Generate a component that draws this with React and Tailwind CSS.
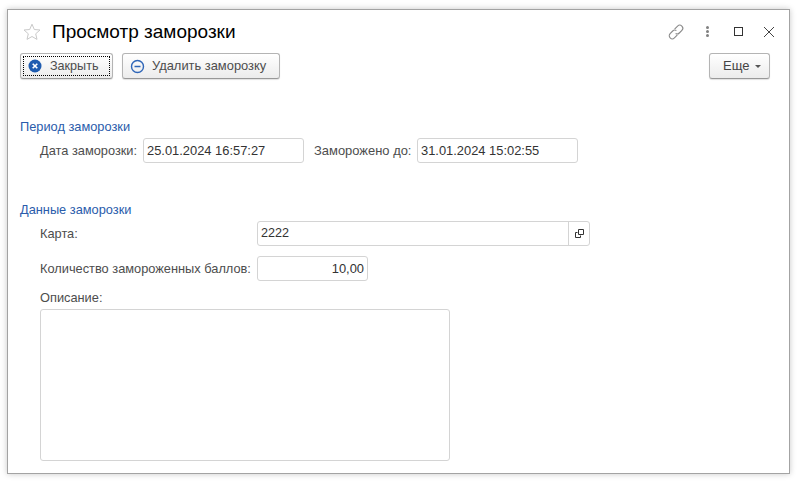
import React from "react";

function Field({ value, className = "" }) {
  return (
    <div className={"h-[25px] rounded-[3px] border border-[#d4d4d4] bg-white pl-[3px] pr-[3px] flex items-center text-[12.9px] text-[#333] " + className}>
      {value}
    </div>
  );
}

function Button({ children, className = "" }) {
  return (
    <div className={"h-[26px] rounded-[3px] border border-[#b4b4b4] border-b-[#989898] bg-gradient-to-b from-white to-[#ececec] shadow-[0_1px_1px_rgba(0,0,0,0.12)] text-[12.6px] text-[#4d4d4d] flex items-center " + className}>
      {children}
    </div>
  );
}

export default function App() {
  return (
    <div className="w-[800px] h-[483px] bg-white pl-[7px] pt-[9px] overflow-hidden" style={{ fontFamily: '"Liberation Sans", Arial, sans-serif' }}>
      <div className="w-[783px] h-[465px] border border-[#a3a3a3] bg-white shadow-[0_0_6px_rgba(0,0,0,0.22)] flex flex-col pl-[12px] pr-[19px]">
        {/* header */}
        <div className="h-[43px] flex items-center shrink-0">
          <svg width="20" height="20" viewBox="0 0 20 20" className="ml-[2px] mt-[1px]">
            <path d="M10 2.2l2.3 5.3 5.7.5-4.3 3.8 1.3 5.6L10 14.5l-5 2.9 1.3-5.6L2 8l5.7-.5z" fill="none" stroke="#c9c9c9" strokeWidth="1" />
          </svg>
          <div className="ml-[10px] text-[19px] text-black leading-none">Просмотр заморозки</div>
          <div className="ml-auto flex items-center mr-[-5px]">
            <svg width="18" height="18" viewBox="0 0 18 18" fill="none" stroke="#8a8a8a" strokeWidth="1.1" className="mr-[1px]">
              <path d="M7.6 6.2l3-3.1a3 3 0 0 1 4.3 4.2l-2.6 2.7a3 3 0 0 1-3.7.5" />
              <path d="M10.4 11.8l-3 3.1a3 3 0 0 1-4.3-4.2l2.6-2.7a3 3 0 0 1 3.7-.5" />
            </svg>
            <div className="ml-[20px] flex flex-col gap-[1px]">
              <div className="w-[3px] h-[3px] rounded-full bg-[#808080]" />
              <div className="w-[3px] h-[3px] rounded-full bg-[#808080]" />
              <div className="w-[3px] h-[3px] rounded-full bg-[#808080]" />
            </div>
            <div className="ml-[25px] w-[9px] h-[9px] border border-[#333]" />
            <svg width="12" height="12" viewBox="0 0 12 12" className="ml-[20px]" stroke="#444" strokeWidth="1">
              <path d="M1 1l10 10M11 1L1 11" />
            </svg>
          </div>
        </div>

        {/* toolbar */}
        <div className="flex shrink-0">
          <Button className="w-[93px] p-[2px]">
            <div className="flex-1 h-full border border-dotted border-black flex items-center pl-[4px]">
              <svg width="14" height="14" viewBox="0 0 14 14">
                <circle cx="7" cy="7" r="6.5" fill="#1f5cb0" />
                <path d="M4.7 4.7l4.6 4.6M9.3 4.7L4.7 9.3" stroke="#fff" strokeWidth="1.6" />
              </svg>
              <span className="ml-[8px]">Закрыть</span>
            </div>
          </Button>
          <Button className="ml-[9px] w-[158px] pl-[7px]">
            <svg width="15" height="15" viewBox="0 0 15 15" fill="none">
              <circle cx="7.5" cy="7.5" r="6" stroke="#2f66b8" strokeWidth="1.4" />
              <path d="M4.5 7.5h6" stroke="#2f66b8" strokeWidth="1.5" />
            </svg>
            <span className="ml-[7px] text-[12.9px]">Удалить заморозку</span>
          </Button>
          <Button className="ml-auto w-[61px] pl-[13px]">
            <span className="text-[13px] text-[#444]">Еще</span>
            <div className="ml-[6px] mt-[1px] w-0 h-0 border-x-[3px] border-x-transparent border-t-[3px] border-t-[#555]" />
          </Button>
        </div>

        {/* period */}
        <div className="mt-[41px] h-[14px] text-[12.8px] leading-[14px] text-[#2a5cab]">Период заморозки</div>
        <div className="mt-[4px] ml-[20px] flex items-center text-[12.8px] text-[#4d4d4d]">
          <span className="w-[103px]">Дата заморозки:</span>
          <Field value="25.01.2024 16:57:27" className="w-[161px]" />
          <span className="ml-[10px] w-[103px] text-[12.95px] whitespace-nowrap">Заморожено до:</span>
          <Field value="31.01.2024 15:02:55" className="w-[161px]" />
        </div>

        {/* data */}
        <div className="mt-[40px] h-[14px] text-[12.8px] leading-[14px] text-[#2a5cab]">Данные заморозки</div>
        <div className="mt-[4px] ml-[20px] flex items-center text-[12.8px] text-[#4d4d4d]">
          <span className="w-[217px]">Карта:</span>
          <div className="w-[333px] h-[25px] rounded-[3px] border border-[#d4d4d4] flex items-center text-[12.6px] text-[#333]">
            <span className="flex-1 pl-[3px]">2222</span>
            <div className="w-[21px] h-full border-l border-[#d4d4d4] flex items-center justify-center">
              <svg width="9" height="9" viewBox="0 0 9 9" fill="none" stroke="#333" strokeWidth="1">
                <path d="M3.5 .5h5v5h-5z" />
                <path d="M2.5 3.5h-2v5h5v-2" />
              </svg>
            </div>
          </div>
        </div>
        <div className="mt-[10px] ml-[20px] flex items-center text-[12.8px] text-[#4d4d4d]">
          <span className="w-[217px] whitespace-nowrap">Количество замороженных баллов:</span>
          <Field value="10,00" className="w-[111px] h-[24px] justify-end text-right" />
        </div>
        <div className="mt-[10px] ml-[20px] h-[14px] text-[12.8px] leading-[14px] text-[#4d4d4d]">Описание:</div>
        <div className="mt-[4px] ml-[20px] w-[410px] h-[152px] rounded-[3px] border border-[#d4d4d4]" />
      </div>
    </div>
  );
}
